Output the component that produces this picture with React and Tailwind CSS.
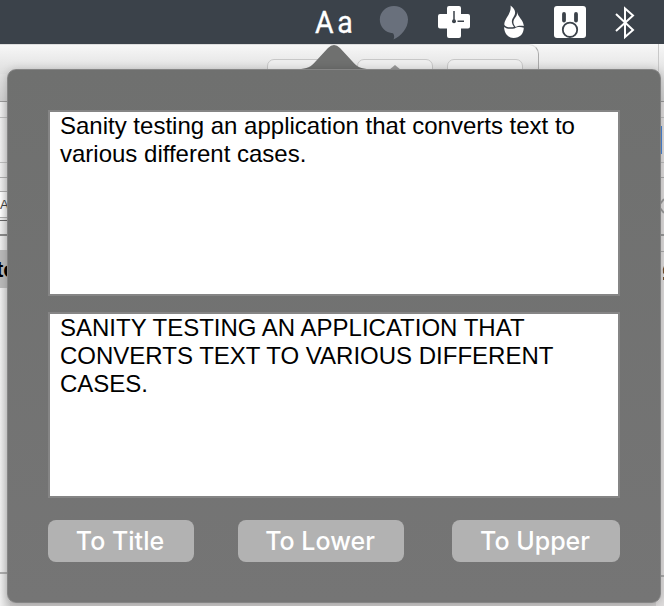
function MenuBar() {
  return (
    <header className="flex h-[44px] w-full items-start bg-[#3b424a] pl-[315px] text-white">
      <div className="flex w-[64px] items-center font-['Roboto','Inter',sans-serif] text-[31px] leading-[45px]">
        <span className="inline-block origin-left scale-x-[0.92] tracking-[4px] [-webkit-text-stroke:0.3px_white]">Aa</span>
      </div>
      <div className="flex items-start pt-[5px]">
        <svg className="h-[36px] w-[30px]" viewBox="1 0 30 36" fill="#69707c">
          <path d="M16 1C8 1 1.800 7 1.800 14.500S7.500 28 15 28.200C16.500 30 16.500 32 15.500 34.500C23 31 30 23.500 30 14.500C30 7 24 1 16 1Z" />
        </svg>
        <svg className="ml-[29px] mt-[1px] h-[32px] w-[32px]" viewBox="0 0 32 32" fill="none">
          <path fill="#fff" d="M12 0H21Q23 0 23 2V8H30Q32 8 32 10V20.500Q32 22.500 30 22.500H23V30Q23 32 21 32H11Q9 32 9 30V22.500H2Q0 22.500 0 20.500V10Q0 8 2 8H9V2Q9 0 11 0Z" />
          <path d="M16 5V15M19.500 15.300H26" stroke="#3b424a" strokeWidth="1.500" />
          <circle cx="16" cy="15.300" r="2" fill="#3b424a" />
        </svg>
        <svg className="ml-[33px] h-[34px] w-[22px]" viewBox="0 0 22 34">
          <path fill="#fff" d="M7.500 .5C12.500 4 13.300 8 10.500 12C8 15.500 8.500 18.500 11 22C7 22.800 3 22.300 1.400 20C.5 14 9 9 7.500 .5Z" />
          <path fill="#fff" d="M14 7C15 12 20.500 15 20.800 21C18 20.500 15 20.500 12.600 22C9.800 18.500 9.800 16 12 13C13.700 11 14.200 9.500 14 7Z" />
          <path fill="#fff" d="M1.100 22C4 24.300 8 24 11.500 23.500C14.500 21.500 18 21.800 20.800 22.800C20.500 29 17 33 10.500 33C4.500 32.500 1.200 28 1.100 22Z" />
        </svg>
        <svg className="ml-[29px] mt-[1px] h-[32px] w-[32px]" viewBox="0 0 32 32" fill="none">
          <rect width="32" height="32" rx="3" fill="#fff" />
          <path d="M10 8V14.500M22 8V14.500" stroke="#3b424a" strokeWidth="3.800" strokeLinecap="round" />
          <circle cx="16" cy="23.800" r="7.200" stroke="#3b424a" strokeWidth="1.800" />
        </svg>
        <svg className="ml-[29px] mt-[1px] h-[34px] w-[20px]" viewBox="0 0 20 34" fill="none" stroke="#fff" strokeWidth="2">
          <path d="M1 8L18 24L10 31V2.500L18 9.500L1 25" />
        </svg>
      </div>
    </header>
  );
}

function LeftEdge() {
  return (
    <div className="flex w-[10px] flex-col overflow-hidden bg-linear-to-r from-[#efefef] to-[#d0d0d0]">
      <div className="h-px shrink-0 bg-[#999]" />
      <div className="mt-[15px] h-px shrink-0 bg-[#bbb]" />
      <div className="mt-[44px] h-px shrink-0 bg-[#bbb]" />
      <div className="mt-[14px] h-px shrink-0 bg-[#aaa]" />
      <div className="mt-[13px] flex h-[27px] shrink-0 items-center border-y border-[#aaa] bg-linear-to-r from-white to-[#d8d8d8] font-['Liberation_Sans',sans-serif] text-[13px] text-[#444]">A</div>
      <div className="mt-[2px] h-px shrink-0 bg-[#666]" />
      <div className="mt-[13px] h-[2px] shrink-0 bg-[#888]" />
      <div className="mt-[14px] flex h-[38px] shrink-0 items-center overflow-hidden bg-[#b9b9b9] font-['Liberation_Sans',sans-serif] text-[22px] font-bold text-black">
        <span className="-ml-[4px]">to</span>
      </div>
      <div className="mt-[284px] h-[2px] shrink-0 bg-[#aaa]" />
    </div>
  );
}

function RightEdge() {
  return (
    <div className="flex w-[8px] flex-col overflow-hidden bg-[#dedcdc]">
      <div className="h-px shrink-0 bg-[#999]" />
      <div className="mt-[15px] h-px shrink-0 bg-[#bbb]" />
      <div className="mt-[8px] h-[28px] w-[6px] shrink-0 bg-[#4a86d8]" />
      <div className="mt-[8px] h-px shrink-0 bg-[#bbb]" />
      <div className="mt-[14px] h-px shrink-0 bg-[#aaa]" />
      <svg className="ml-[4px] mt-[19px] h-[18px] w-[4px] shrink-0" viewBox="0 0 4 18" fill="none" stroke="#999" strokeWidth="2"><path d="M4 2L0 7M4 16L0 11" /></svg>
      <div className="mt-[19px] h-[2px] shrink-0 bg-[#999]" />
      <div className="mt-[15px] h-px shrink-0 bg-[#aaa]" />
      <svg className="ml-[6px] mt-[13px] h-[16px] w-[2px] shrink-0" viewBox="0 0 2 16" fill="#75502f"><path d="M2 1Q0 4 1 8L2 9ZM1 12H2V15H1Z" /></svg>
      <div className="mt-[294px] h-[2px] shrink-0 bg-[#aaa]" />
    </div>
  );
}

function ToolbarButton({ children }) {
  return (
    <div className="flex h-[30px] w-[76px] justify-center rounded-[7px] border border-[#c7c7c7] bg-[#eee] pt-[5px]">
      {children}
    </div>
  );
}

function Backdrop() {
  return (
    <div className="col-start-1 row-start-1 flex h-[562px] flex-col overflow-hidden bg-linear-to-b from-[#d8d8d8] to-[#cccaca]">
      <div className="flex h-[57px] shrink-0 justify-between bg-linear-to-b from-[#f7f7f7] to-[#cfcfcf]">
        <div className="flex w-[539px] items-start">
          <div className="flex h-[30px] w-full items-start justify-end gap-[14px] rounded-tr-[10px] border-r border-t border-r-[#aaa] border-t-[#ddd] bg-linear-to-b from-[#f7f7f7] to-[#dedede] pr-[15px] pt-[14px]">
            <ToolbarButton />
            <ToolbarButton>
              <svg className="h-[5px] w-[12px]" viewBox="0 0 12 5"><path d="M0 5L6 0L12 5Z" fill="#999" /></svg>
            </ToolbarButton>
            <ToolbarButton />
          </div>
        </div>
        <div className="w-[6px] border-l border-[#c8c8c8]" />
      </div>
      <div className="flex h-[505px] justify-between">
        <LeftEdge />
        <RightEdge />
      </div>
    </div>
  );
}

function TextBox({ lines }) {
  return (
    <div className="h-[186px] w-[572px] border-2 border-[#858585] bg-white pl-[10px] font-['Liberation_Sans',Arial,sans-serif] text-[24px] leading-[28px] text-black">
      {lines.map((line) => (
        <p key={line} className="whitespace-nowrap">{line}</p>
      ))}
    </div>
  );
}

function Button({ className, children }) {
  return (
    <button className={`h-[42px] rounded-[8px] bg-[#b2b2b2] pr-[2px] text-center font-['Inter',sans-serif] text-[25px] font-medium leading-[42px] text-white ${className}`}>
      {children}
    </button>
  );
}

export default function App() {
  return (
    <div className="flex h-[606px] w-[664px] flex-col overflow-hidden bg-[#f3f3f3]">
      <MenuBar />
      <div className="grid grid-cols-[664px]">
        <Backdrop />
        <div className="z-10 col-start-1 row-start-1 flex flex-col pl-[7px]">
          <svg className="ml-[291px] h-[25px] w-[72px] shrink-0 overflow-visible" viewBox="0 0 72 25">
            <path fill="#6f706f" d="M0 25C9 25 13 23 18 17L30 4Q36-2 42 4L54 17C59 23 63 25 72 25V27H0Z" />
          </svg>
          <main className="flex h-[534px] w-[654px] flex-col gap-[16px] rounded-[9px] border border-[#858585] bg-linear-to-b from-[#6f706f] to-[#757575] px-[40px] pt-[40px] shadow-[0_1px_10px_rgba(0,0,0,0.22)]">
            <TextBox lines={['Sanity testing an application that converts text to', 'various different cases.']} />
            <TextBox lines={['SANITY TESTING AN APPLICATION THAT', 'CONVERTS TEXT TO VARIOUS DIFFERENT', 'CASES.']} />
            <div className="flex w-[572px] pt-[6px]">
              <Button className="w-[146px]">To Title</Button>
              <Button className="ml-[44px] w-[166px]">To Lower</Button>
              <Button className="ml-[48px] w-[168px]">To Upper</Button>
            </div>
          </main>
        </div>
      </div>
    </div>
  );
}
